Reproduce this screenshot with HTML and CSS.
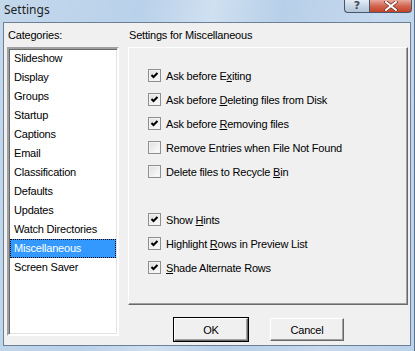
FILE: index.html
```html
<!DOCTYPE html>
<html lang="en">

<head>
    <meta charset="UTF-8">
    <title>Settings</title>
    <link rel="stylesheet" href="styles.css">
</head>

<body>
    <div class="window">
        <div class="titlebar">
            <span class="title">Settings</span>
            <div class="caption-buttons">
                <div class="cbtn help">?</div>
                <div class="cbtn close">
                    <svg width="14" height="10" viewBox="0 0 14 10">
                        <path d="M2 1 L12 9 M12 1 L2 9" stroke="#6b2a20" stroke-width="3.4" stroke-linecap="square" />
                        <path d="M2 1 L12 9 M12 1 L2 9" stroke="#ffffff" stroke-width="2" stroke-linecap="square" />
                    </svg>
                </div>
            </div>
        </div>

        <div class="client">
            <div class="categories">
                <div class="label">Categories:</div>
                <ul class="list">
                    <li>Slideshow</li>
                    <li>Display</li>
                    <li>Groups</li>
                    <li>Startup</li>
                    <li>Captions</li>
                    <li>Email</li>
                    <li>Classification</li>
                    <li>Defaults</li>
                    <li>Updates</li>
                    <li>Watch Directories</li>
                    <li class="selected">Miscellaneous</li>
                    <li>Screen Saver</li>
                </ul>
            </div>

            <div class="settings">
                <div class="label">Settings for Miscellaneous</div>
                <div class="panel">
                    <div class="group">
                        <div class="check on"><span class="box"><svg width="11" height="11"><path d="M2.5 5 L4.5 7 L8.5 3" fill="none" stroke="#000" stroke-width="2" /></svg></span><span>Ask before E<u>x</u>iting</span></div>
                        <div class="check on"><span class="box"><svg width="11" height="11"><path d="M2.5 5 L4.5 7 L8.5 3" fill="none" stroke="#000" stroke-width="2" /></svg></span><span>Ask before <u>D</u>eleting files from Disk</span></div>
                        <div class="check on"><span class="box"><svg width="11" height="11"><path d="M2.5 5 L4.5 7 L8.5 3" fill="none" stroke="#000" stroke-width="2" /></svg></span><span>Ask before <u>R</u>emoving files</span></div>
                        <div class="check"><span class="box"></span><span>Remove Entries when File Not Found</span></div>
                        <div class="check"><span class="box"></span><span>Delete files to Recycle <u>B</u>in</span></div>
                    </div>
                    <div class="group">
                        <div class="check on"><span class="box"><svg width="11" height="11"><path d="M2.5 5 L4.5 7 L8.5 3" fill="none" stroke="#000" stroke-width="2" /></svg></span><span>Show <u>H</u>ints</span></div>
                        <div class="check on"><span class="box"><svg width="11" height="11"><path d="M2.5 5 L4.5 7 L8.5 3" fill="none" stroke="#000" stroke-width="2" /></svg></span><span>Highlight <u>R</u>ows in Preview List</span></div>
                        <div class="check on"><span class="box"><svg width="11" height="11"><path d="M2.5 5 L4.5 7 L8.5 3" fill="none" stroke="#000" stroke-width="2" /></svg></span><span><u>S</u>hade Alternate Rows</span></div>
                    </div>
                </div>
                <div class="buttons">
                    <button class="default">OK</button>
                    <button>Cancel</button>
                </div>
            </div>
        </div>
    </div>
</body>

</html>
```

FILE: styles.css
```css
body {
    margin: 0;
    font-family: "Liberation Sans", Arial, sans-serif;
    font-size: 11px;
    color: #000;
}

.window {
    width: 415px;
    height: 351px;
    box-sizing: border-box;
    padding: 0 3px 5px 3px;
    display: flex;
    flex-direction: column;
    background: linear-gradient(100deg, #c4d8ec 0%, #b9d1ea 30%, #cfe0f1 45%, #b7cfe8 60%, #c6d9ee 80%, #bcd2ea 100%);
    border-right: 1px solid #5c7390;
}

.titlebar {
    height: 22px;
    display: flex;
    justify-content: space-between;
    align-items: flex-start;
    flex-shrink: 0;
}

.title {
    font-family: "Noto Sans", "Open Sans", sans-serif;
    font-size: 12px;
    line-height: 20px;
    margin-left: 1px;
    color: #1e1e1e;
}

.caption-buttons {
    display: flex;
    margin-right: -1px;
}

.cbtn {
    height: 12px;
    border: 1px solid #46576c;
    border-top: none;
    display: flex;
    align-items: center;
    justify-content: center;
}

.help {
    width: 24px;
    border-right: none;
    border-bottom-left-radius: 4px;
    background: linear-gradient(#e4ecf5, #c3d2e2 60%, #b3c5d9);
    color: #3d4a5a;
    font-family: "DejaVu Sans", sans-serif;
    font-weight: bold;
    font-size: 11px;
    line-height: 12px;
}

.close {
    width: 41px;
    border-bottom-right-radius: 4px;
    background: linear-gradient(#e9a99c, #d2654f 50%, #c44127);
}

.client {
    flex: 1;
    background: #f0f0f0;
    border: 1px solid #6d7f94;
    display: flex;
    padding: 6px 0 0 3px;
    gap: 9px;
}

.label {
    height: 18px;
    line-height: 13px;
    letter-spacing: -0.2px;
    padding-left: 1px;
}

.categories {
    width: 112px;
}

.list {
    list-style: none;
    margin: 0;
    padding: 0 1px;
    height: 289px;
    box-sizing: border-box;
    background: #fff;
    border: 2px solid;
    border-color: #a0a0a0 #ffffff #ffffff #a0a0a0;
    box-shadow: inset 1px 1px 0 #696969, inset -1px -1px 0 #e3e3e3;
}

.list li {
    height: 19px;
    line-height: 19px;
    padding-left: 4px;
    letter-spacing: -0.2px;
    white-space: nowrap;
}

.list li.selected {
    background: #3399ff;
    color: #fff;
    outline: 1px dotted #000;
    outline-offset: -1px;
}

.settings {
    width: 280px;
    display: flex;
    flex-direction: column;
}

.panel {
    height: 258px;
    box-sizing: border-box;
    border: 1px solid;
    border-color: #ffffff #696969 #696969 #ffffff;
    box-shadow: inset -1px -1px 0 #a0a0a0;
    padding: 21px 0 0 19px;
}

.group {
    display: flex;
    flex-direction: column;
    gap: 11px;
    margin-bottom: 35px;
}

.check {
    display: flex;
    align-items: center;
    gap: 5px;
    height: 13px;
    letter-spacing: -0.2px;
    white-space: nowrap;
}

.box {
    width: 13px;
    height: 13px;
    box-sizing: border-box;
    border: 1px solid #8e8f8f;
    background: linear-gradient(135deg, #dcdcdc, #ffffff);
    box-shadow: inset 0 0 0 1px #f4f4f4;
    flex-shrink: 0;
}

.box svg {
    display: block;
}

.buttons {
    display: flex;
    gap: 22px;
    padding: 13px 0 0 46px;
}

button {
    width: 74px;
    height: 23px;
    font-family: inherit;
    font-size: 11px;
    letter-spacing: -0.2px;
    background: #f0f0f0;
    border: 1px solid;
    border-color: #ffffff #696969 #696969 #ffffff;
    box-shadow: inset -1px -1px 0 #a0a0a0;
    padding: 0;
    color: #000;
}

button.default {
    outline: 1px solid #000;
    outline-offset: 0;
}
```
